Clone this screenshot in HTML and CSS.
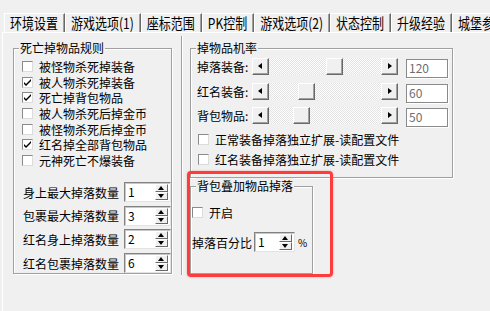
FILE: index.html
```html
<!DOCTYPE html>
<html>
    <head>
        <meta charset="utf-8">
        <title>掉落设置</title>
        <link rel="stylesheet" href="styles.css">
    </head>
    <body>
        <nav class="tabs">
            <div class="tab"><span>环境设置</span></div>
            <div class="tab"><span>游戏选项(1)</span></div>
            <div class="tab"><span>座标范围</span></div>
            <div class="tab"><span>PK控制</span></div>
            <div class="tab"><span>游戏选项(2)</span></div>
            <div class="tab"><span>状态控制</span></div>
            <div class="tab"><span>升级经验</span></div>
            <div class="tab"><span>城堡参数</span></div>
        </nav>

        <main class="panel">
            <section class="group group-rules">
                <div class="group-title">死亡掉物品规则</div>
                <div class="checks">
                    <label class="check"><i class="box"></i>被怪物杀死掉装备</label>
                    <label class="check"><i class="box on"></i>被人物杀死掉装备</label>
                    <label class="check"><i class="box on"></i>死亡掉背包物品</label>
                    <label class="check"><i class="box"></i>被人物杀死后掉金币</label>
                    <label class="check"><i class="box"></i>被怪物杀死后掉金币</label>
                    <label class="check"><i class="box on"></i>红名掉全部背包物品</label>
                    <label class="check"><i class="box"></i>元神死亡不爆装备</label>
                </div>
                <div class="counts">
                    <div class="count-row"><span class="count-label">身上最大掉落数量</span><div class="spin"><span class="spin-val">1</span><span class="spin-btns"><b class="up"></b><b class="down"></b></span></div></div>
                    <div class="count-row"><span class="count-label">包裹最大掉落数量</span><div class="spin"><span class="spin-val">3</span><span class="spin-btns"><b class="up"></b><b class="down"></b></span></div></div>
                    <div class="count-row"><span class="count-label">红名身上掉落数量</span><div class="spin"><span class="spin-val">2</span><span class="spin-btns"><b class="up"></b><b class="down"></b></span></div></div>
                    <div class="count-row"><span class="count-label">红名包裹掉落数量</span><div class="spin"><span class="spin-val">6</span><span class="spin-btns"><b class="up"></b><b class="down"></b></span></div></div>
                </div>
            </section>

            <div class="side">
                <section class="group group-rate">
                    <div class="group-title">掉物品机率</div>
                    <div class="rate-row">
                        <span class="rate-label">掉落装备:</span>
                        <div class="slider"><b class="arrow left"></b><span class="track"><b class="thumb" style="margin-left:57px"></b></span><b class="arrow right"></b></div>
                        <span class="edit">120</span>
                    </div>
                    <div class="rate-row">
                        <span class="rate-label">红名装备:</span>
                        <div class="slider"><b class="arrow left"></b><span class="track"><b class="thumb" style="margin-left:29px"></b></span><b class="arrow right"></b></div>
                        <span class="edit">60</span>
                    </div>
                    <div class="rate-row">
                        <span class="rate-label">背包物品:</span>
                        <div class="slider"><b class="arrow left"></b><span class="track"><b class="thumb" style="margin-left:24px"></b></span><b class="arrow right"></b></div>
                        <span class="edit">50</span>
                    </div>
                    <div class="rate-checks">
                        <label class="check"><i class="box"></i>正常装备掉落独立扩展-读配置文件</label>
                        <label class="check"><i class="box"></i>红名装备掉落独立扩展-读配置文件</label>
                    </div>
                </section>

                <section class="group group-stack">
                    <div class="group-title">背包叠加物品掉落</div>
                    <label class="check"><i class="box"></i>开启</label>
                    <div class="percent-row">
                        <span>掉落百分比</span>
                        <div class="spin spin-small"><span class="spin-val">1</span><span class="spin-btns"><b class="up"></b><b class="down"></b></span></div>
                        <span class="percent">%</span>
                    </div>
                </section>
            </div>
        </main>

        <div class="highlight"></div>
    </body>
</html>
```

FILE: styles.css
```css
body {
    margin: 0;
    width: 490px;
    height: 311px;
    overflow: hidden;
    background: #f0f0f0;
    color: #000;
    font-family: "Noto Sans CJK SC", "DejaVu Sans", sans-serif;
    font-size: 12px;
    position: relative;
}

/* tab strip */
.tabs {
    display: flex;
    margin: 13px 0 0 4px;
    height: 19px;
    white-space: nowrap;
}

.tab {
    border-top: 1px solid #fff;
    border-left: 1px solid #fff;
    border-right: 1px solid #696969;
    box-shadow: inset -1px 0 #a0a0a0;
    padding: 0 6px 0 5px;
    line-height: 18px;
}

.tab span {
    display: inline-block;
    transform: scaleY(1.25);
}

.panel {
    display: flex;
    margin-left: 2px;
    height: 280px;
    border-top: 1px solid #fff;
    border-left: 1px solid #fff;
}

/* group boxes */
.group {
    position: relative;
    box-sizing: border-box;
    border: 1px solid #a0a0a0;
    box-shadow: inset 1px 1px #fff, 1px 1px #fff;
}

.group-title {
    position: absolute;
    top: -9px;
    left: 5px;
    padding: 0 1px;
    line-height: 16px;
    background: #f0f0f0;
}

.group-rules {
    margin: 15px 0 0 10px;
    width: 159px;
    height: 226px;
    padding: 10px 0 0 8px;
}

.check {
    display: flex;
    align-items: center;
    height: 15.6px;
    white-space: nowrap;
}

.box {
    box-sizing: border-box;
    width: 11px;
    height: 11px;
    margin-right: 6px;
    flex: none;
    background: #fff;
    border: 1px solid;
    border-color: #8a8a8a #dcdcdc #dcdcdc #8a8a8a;
}

.box.on {
    background: #fff url("data:image/svg+xml,%3Csvg xmlns='http://www.w3.org/2000/svg' width='9' height='9'%3E%3Cpath d='M1 4l2 2 5-5v2l-5 5-2-2z' fill='%23000'/%3E%3C/svg%3E") center no-repeat;
}

.counts {
    margin-top: 12px;
    padding-left: 1px;
}

.count-row {
    display: flex;
    align-items: center;
    height: 23.7px;
}

.count-label {
    width: 101px;
}

/* spin edit */
.spin {
    box-sizing: border-box;
    display: flex;
    align-items: center;
    width: 47px;
    height: 20px;
    background: #fff;
    border: 1px solid;
    border-color: #828282 #e3e3e3 #e3e3e3 #828282;
    box-shadow: inset 1px 1px #c8c8c8;
}

.spin-val {
    flex: 1;
    padding-left: 3px;
    line-height: 16px;
}

.spin-btns {
    display: flex;
    flex-direction: column;
    width: 13px;
    height: 16px;
    margin-right: 2px;
}

.spin-btns b {
    flex: 1;
    position: relative;
    background: #f0f0f0;
    border: 1px solid;
    border-color: #fff #696969 #696969 #fff;
}

.spin-btns b::after {
    content: "";
    position: absolute;
    left: 2px;
    border-left: 3.5px solid transparent;
    border-right: 3.5px solid transparent;
}

.spin-btns .up::after {
    top: 1px;
    border-bottom: 4px solid #000;
}

.spin-btns .down::after {
    top: 1px;
    border-top: 4px solid #000;
}

.spin-small {
    width: 41px;
}

/* right column */
.side {
    margin: 3px 0 0 9px;
    height: 239px;
    padding-left: 8px;
    border-left: 1px solid #a0a0a0;
    box-shadow: inset 1px 0 #fff;
}

.group-rate {
    margin-top: 12px;
    width: 263px;
    height: 130px;
    padding: 9px 0 0 6px;
}

.rate-row {
    display: flex;
    align-items: flex-start;
    height: 17px;
    margin-bottom: 7.5px;
}

.rate-label {
    width: 55px;
    line-height: 17px;
}

.slider {
    display: flex;
    width: 146px;
    height: 17px;
}

.track {
    flex: 1;
    display: flex;
    background-image: repeating-conic-gradient(#fff 0 25%, #e2e2e2 0 50%);
    background-size: 2px 2px;
}

.arrow,
.thumb {
    box-sizing: border-box;
    position: relative;
    width: 17px;
    height: 17px;
    flex: none;
    background: #f0f0f0;
    border: 1px solid;
    border-color: #fff #696969 #696969 #fff;
    box-shadow: inset -1px -1px #a0a0a0;
}

.arrow::after {
    content: "";
    position: absolute;
    top: 4px;
    border-top: 3.5px solid transparent;
    border-bottom: 3.5px solid transparent;
}

.arrow.left::after {
    left: 5px;
    border-right: 4px solid #000;
}

.arrow.right::after {
    left: 6px;
    border-left: 4px solid #000;
}

.edit {
    box-sizing: border-box;
    margin: 1px 0 0 8px;
    width: 42px;
    height: 19px;
    padding-left: 2px;
    line-height: 16px;
    color: #6d6d6d;
    background: #fff;
    border: 1px solid #8a8a8a;
    box-shadow: 1px 1px #fff;
}

.rate-checks {
    margin: 3px 0 0 1px;
}

.rate-checks .check {
    height: 16px;
    margin-bottom: 4px;
}

.group-stack {
    margin-top: 8px;
    width: 123px;
    height: 88px;
    padding: 17px 0 0 1px;
}

.group-stack .check {
    height: 16px;
}

.percent-row {
    display: flex;
    align-items: center;
    gap: 2px;
    margin-top: 12px;
    height: 20px;
}

.percent {
    margin-left: 1px;
    font-size: 10px;
}

/* red annotation frame */
.highlight {
    position: absolute;
    left: 187px;
    top: 171px;
    width: 140px;
    height: 100px;
    border: 3px solid #ff3c3c;
    border-radius: 4px;
    box-shadow: 0 0 2px rgba(255, 60, 60, 0.5);
}
```
